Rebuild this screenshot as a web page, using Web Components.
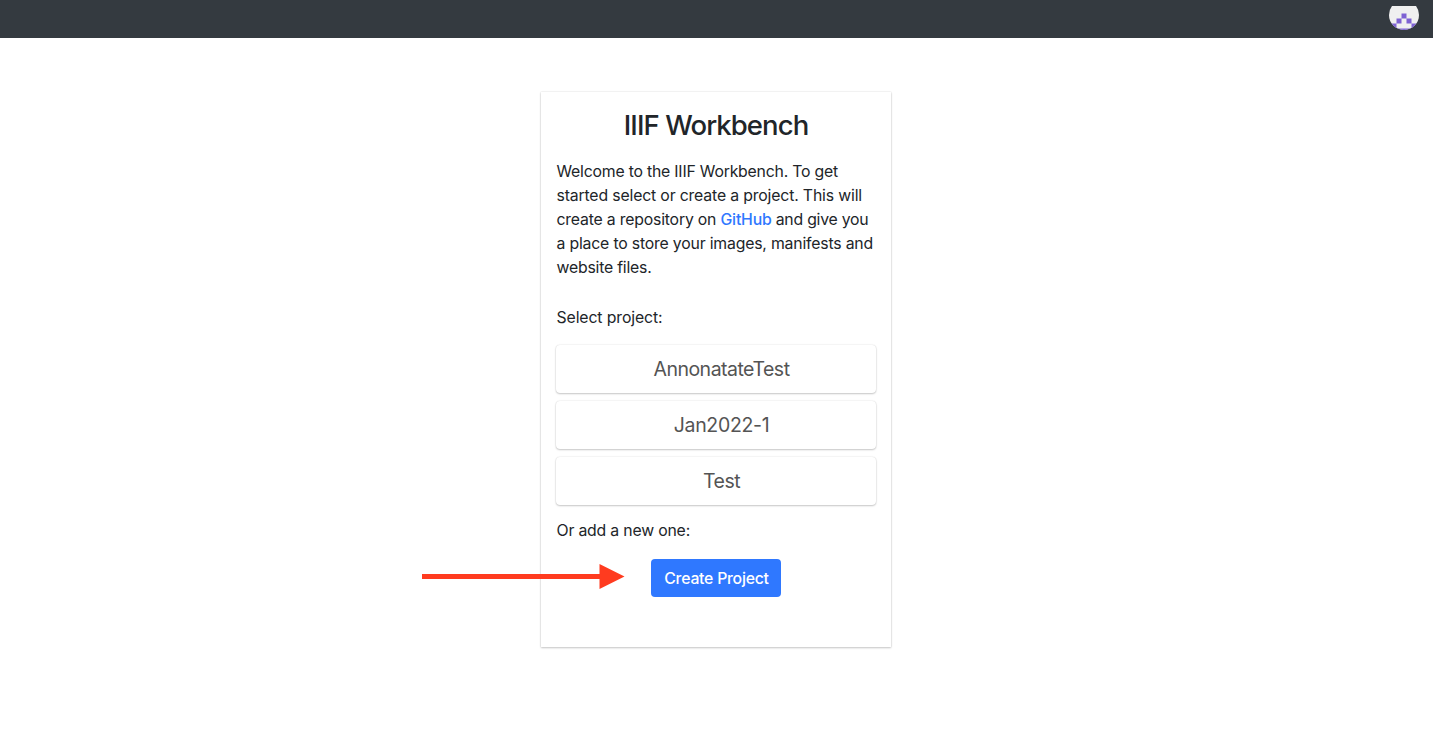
<!DOCTYPE html>
<html lang="en">
<head>
<meta charset="utf-8">
<title>IIIF Workbench</title>
<style>
html,body{margin:0;height:100%;background:#fff}
body{font:16px/24px Inter,"Liberation Sans",sans-serif;color:#212529;overflow:hidden}
</style>
</head>
<body>
<workbench-page></workbench-page>
<script>
class BaseElement extends HTMLElement {
  constructor() {
    super();
    this.attachShadow({mode: 'open'}).innerHTML = this.constructor.markup;
  }
}

/* One line of text, tracked so that it fills the width given in pixels. */
class FitText extends BaseElement {
  static markup = `<style>:host{display:inline-block;white-space:nowrap}span{display:inline-block;white-space:pre}</style><span><slot></slot></span>`;
  connectedCallback() {
    const span = this.shadowRoot.querySelector('span');
    const width = Number(this.getAttribute('width'));
    const count = this.textContent.length;
    span.style.letterSpacing = (width - span.getBoundingClientRect().width) / count + 'px';
  }
}

class UserAvatar extends BaseElement {
  static markup = `<style>:host{display:block;width:30px;height:24px}svg{display:block}</style>
  <svg width="30" height="24" viewBox="0 0 30 24"><defs><clipPath id="c"><circle cx="15" cy="9" r="15"/></clipPath></defs>
  <g clip-path="url(#c)"><rect width="30" height="24" fill="#f0f0f0"/><path fill="#7e62d3" d="M12.500 7.500h5v5h-5zM7.500 12.500h5v5h-5zM17.500 12.500h5v5h-5zM0 17.500h7.500v5h15v-5H30V24H0z"/></g></svg>`;
}

class TopBar extends BaseElement {
  static markup = `<style>:host{display:flex;justify-content:flex-end;box-sizing:border-box;height:38px;padding:6px 14px 0 0;background:#343a40}</style><slot></slot>`;
}

class ProjectCard extends BaseElement {
  static markup = `<style>:host{display:flex;align-items:center;justify-content:center;box-sizing:border-box;height:48px;padding-left:11px;border-radius:4px;background:#fff;box-shadow:0 1px 2px rgba(0,0,0,.2),0 0 1.500px rgba(0,0,0,.16);font-size:19.500px;color:#545454}</style><slot></slot>`;
}

class PrimaryButton extends BaseElement {
  static markup = `<style>:host{display:block}button{display:block;width:130px;height:38px;padding:1px 0 0 1px;border:0;border-radius:4px;background:#2f78ff;color:#fff;font:500 15.800px/24px Inter,sans-serif}</style><button><slot></slot></button>`;
}

class PointerArrow extends BaseElement {
  static markup = `<style>:host{position:absolute;left:-119px;top:472px}svg{display:block}</style>
  <svg width="203" height="26" viewBox="0 0 203 26"><path fill="#ff3b1f" d="M0 10H177.500V0L202.500 12.500L177.500 25V15H0Z"/></svg>`;
}

class WorkbenchPanel extends BaseElement {
  static markup = `<style>
  :host{display:block;position:relative;box-sizing:border-box;width:350px;height:555px;padding:16px 15px 0;background:#fff;box-shadow:0 1px 2px rgba(0,0,0,.2),0 0 1.500px rgba(0,0,0,.16);font-size:15.800px}
  h1{margin:0;font-size:27.500px;line-height:34px;font-weight:500;text-align:center}
  p{margin:0 0 0 .5px}
  .intro{margin-top:18px;display:grid;justify-items:start}
  .link{color:#2f78ff;font-weight:500}
  .select{margin-top:26px}
  .list{display:grid;gap:8px;margin-top:15px}
  .add{margin-top:14px}
  .action{display:flex;justify-content:center;margin-top:16px}
  </style>
  <h1><fit-text width="184.500">IIIF Workbench</fit-text></h1>
  <p class="intro">
    <fit-text width="281.500">Welcome to the IIIF Workbench. To get</fit-text>
    <fit-text width="305.500">started select or create a project. This will</fit-text>
    <span><fit-text width="164">create a repository on </fit-text><fit-text class="link" width="51">GitHub</fit-text><fit-text width="97"> and give you</fit-text></span>
    <fit-text width="316.500">a place to store your images, manifests and</fit-text>
    <fit-text width="95">website files.</fit-text>
  </p>
  <p class="select"><fit-text width="106">Select project:</fit-text></p>
  <div class="list">
    <project-card><fit-text width="136">AnnonatateTest</fit-text></project-card>
    <project-card><fit-text width="95.500">Jan2022-1</fit-text></project-card>
    <project-card><fit-text width="37">Test</fit-text></project-card>
  </div>
  <p class="add"><fit-text width="133.500">Or add a new one:</fit-text></p>
  <div class="action"><primary-button><fit-text width="104.500">Create Project</fit-text></primary-button></div>
  <pointer-arrow></pointer-arrow>`;
}

class WorkbenchPage extends BaseElement {
  static markup = `<style>:host{display:block}main{display:flex;justify-content:center;padding:54px 1px 0 0}workbench-panel{flex:none}</style>
  <top-bar><user-avatar></user-avatar></top-bar><main><workbench-panel></workbench-panel></main>`;
}

customElements.define('user-avatar', UserAvatar);
customElements.define('top-bar', TopBar);
customElements.define('project-card', ProjectCard);
customElements.define('primary-button', PrimaryButton);
customElements.define('pointer-arrow', PointerArrow);
customElements.define('workbench-panel', WorkbenchPanel);
customElements.define('workbench-page', WorkbenchPage);
customElements.define('fit-text', FitText);
</script>
</body>
</html>
